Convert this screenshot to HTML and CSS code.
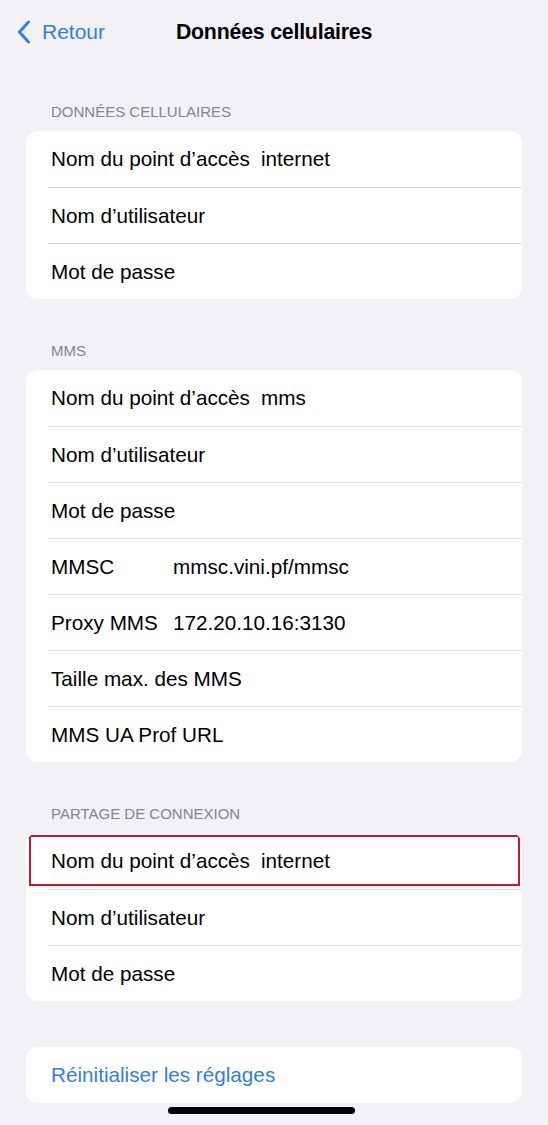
FILE: index.html
```html
<!DOCTYPE html>
<html lang="fr">
<head>
<meta charset="utf-8">
<title>Données cellulaires</title>
<link rel="stylesheet" href="styles.css">
</head>
<body>
<div class="screen">
  <header class="nav">
    <div class="back">
      <svg class="chev" width="14" height="24" viewBox="0 0 14 24"><path d="M11.5 2 L2.5 12 L11.5 22" fill="none" stroke="currentColor" stroke-width="3" stroke-linecap="round" stroke-linejoin="round"/></svg>
      <span>Retour</span>
    </div>
    <h1 class="title">Données cellulaires</h1>
  </header>

  <section class="group">
    <h2 class="ghead">DONNÉES CELLULAIRES</h2>
    <div class="card">
      <div class="row"><span class="label">Nom du point d’accès</span><span class="val">internet</span></div>
      <div class="row"><span class="label">Nom d’utilisateur</span></div>
      <div class="row"><span class="label">Mot de passe</span></div>
    </div>
  </section>

  <section class="group">
    <h2 class="ghead">MMS</h2>
    <div class="card">
      <div class="row"><span class="label">Nom du point d’accès</span><span class="val">mms</span></div>
      <div class="row"><span class="label">Nom d’utilisateur</span></div>
      <div class="row"><span class="label">Mot de passe</span></div>
      <div class="row"><span class="label">MMSC</span><span class="val">mmsc.vini.pf/mmsc</span></div>
      <div class="row"><span class="label">Proxy MMS</span><span class="val">172.20.10.16:3130</span></div>
      <div class="row"><span class="label">Taille max. des MMS</span></div>
      <div class="row"><span class="label">MMS UA Prof URL</span></div>
    </div>
  </section>

  <section class="group">
    <h2 class="ghead">PARTAGE DE CONNEXION</h2>
    <div class="card">
      <div class="row marked"><span class="label">Nom du point d’accès</span><span class="val">internet</span><span class="highlight"></span></div>
      <div class="row"><span class="label">Nom d’utilisateur</span></div>
      <div class="row"><span class="label">Mot de passe</span></div>
    </div>
  </section>

  <section class="group reset">
    <div class="card">
      <div class="row"><span class="link">Réinitialiser les réglages</span></div>
    </div>
  </section>

  <div class="home-bar"></div>
</div>
</body>
</html>
```

FILE: styles.css
```css
* { box-sizing: border-box; }
html, body { margin: 0; padding: 0; }
body {
  background: #f2f1f6;
  font-family: "Liberation Sans", Arial, sans-serif;
  color: #000;
}
.screen {
  width: 548px;
  height: 1125px;
  overflow: hidden;
  position: relative;
}
.nav {
  height: 60px;
  position: relative;
  display: flex;
  align-items: center;
  justify-content: center;
  padding-top: 4px;
}
.back {
  position: absolute;
  left: 17px;
  top: 20px;
  display: flex;
  align-items: center;
  gap: 11px;
  color: #2f80e4;
  font-size: 21px;
}
.chev { display: block; }
.title {
  margin: 0;
  font-size: 21.3px;
  font-weight: 700;
  letter-spacing: -0.2px;
}
.group { padding: 0 26px; }
.ghead {
  margin: 0;
  padding: 43px 0 10px 25px;
  font-size: 15px;
  font-weight: 400;
  color: #85858a;
  line-height: 18px;
}
.card {
  background: #fff;
  border-radius: 12px;
  overflow: hidden;
}
.row {
  position: relative;
  height: 56px;
  display: flex;
  align-items: center;
  gap: 11px;
  font-size: 20.7px;
  border-top: 1px solid #dedde2;
  margin-left: 22px;
  padding-left: 3px;
}
.row:first-child { border-top: 0; }
.label { min-width: 111px; }
.val { color: #000; }
.highlight {
  position: absolute;
  left: -19px;
  right: 2px;
  top: 2px;
  bottom: 3px;
  border: 2px solid #c8172c;
}
.reset { padding-top: 46px; }
.link { color: #2f80e4; }
.home-bar {
  position: absolute;
  left: 168px;
  top: 1107px;
  width: 187px;
  height: 7px;
  border-radius: 4px;
  background: #000;
}
```
